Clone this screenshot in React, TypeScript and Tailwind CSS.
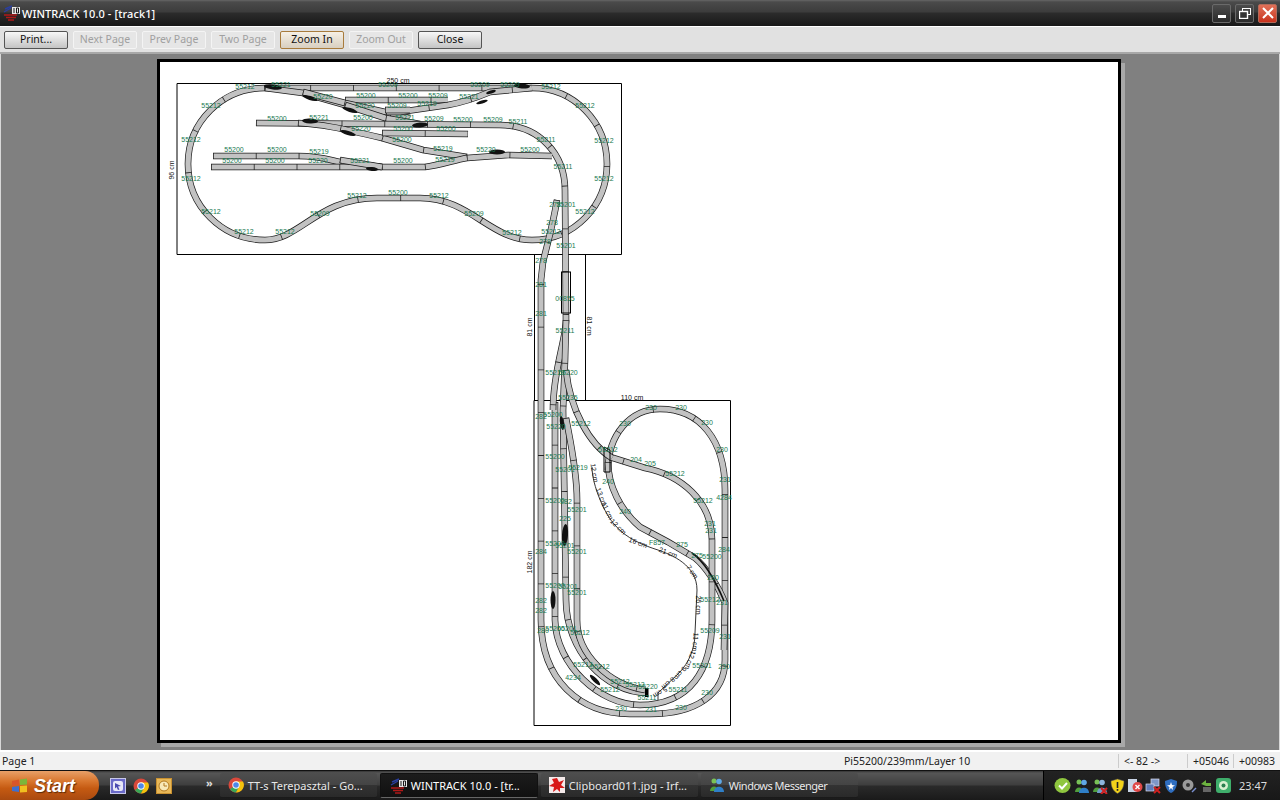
import type { ReactNode } from "react";

const FONT = "font-['Noto_Sans','Liberation_Sans',sans-serif]";

/* Track centre lines, in page coordinates (the svg viewBox matches the page). */
const TRACKS: { d: string; gap?: number }[] = [
  // top oval
  { d: "M265 88 C222 88 188 122 188 164 C188 206 222 240 265 240 C300 240 318 198 377 198 L420 198 C470 198 490 240 532 240 C574 240 607 206 607 164 C607 122 574 88 532 88 L265 88" },
  // yard, top
  { d: "M265 88 L303 93 L345 105 L385 113 L410 118" },
  { d: "M345 100 L448 100" },
  { d: "M303 92 L345 103 L385 112 L400 112 L448 105 C465 102 478 97 490 92 L532 88" },
  { d: "M385 110 L410 110" },
  { d: "M345 105 L385 118 L420 124" },
  // through track leaving for the lower board
  { d: "M256 123 L500 125 C540 125 565 155 565 190 L566 320" },
  { d: "M298 123 C320 124 340 128 382 138 L423 150 L467 157" },
  { d: "M382 133 L468 134" },
  { d: "M213 156 L298 156 C320 156 330 160 340 162 L382 167" },
  { d: "M211 167 L425 167 C440 165 455 160 467 158 L508 155 L552 156" },
  { d: "M340 160 L382 167" },
  // link track, left
  { d: "M557 200 C553 225 547 245 543 262 L541 280 L541 620 C541 680 580 714 630 714 L650 714 C695 714 725 695 725 660 L725 490 C725 440 700 409 660 409 C630 409 608 435 608 470" },
  { d: "M608 462 C608 485 620 510 640 527 L668 542 L695 558 C705 566 718 585 725 603 L724 650" },
  { d: "M555 402 L555 620 C556 665 600 705 640 705 C690 705 712 670 712 620 L712 540 C712 500 680 475 645 468 L610 457" },
  { d: "M566 320 C566 340 553 370 553 410" },
  { d: "M566 320 L565 360 L563 410 L566 600 C566 650 605 693 648 693" },
  { d: "M566 418 C570 440 577 470 577 500 L577 620 C577 655 610 685 645 690" },
  { d: "M566 370 C570 410 590 445 612 458" },
];

/* Turnout motors: cx, cy, rx, ry, angle */
const MOTORS: [number, number, number, number, number][] = [
  [273, 87, 9, 2.5, 6], [310, 98, 8, 2, 18], [350, 110, 8, 2, 18], [310, 121, 8, 2.5, 3],
  [348, 133, 8, 2, 16], [372, 169, 6, 2, 4], [522, 86, 8, 2.5, 4], [491, 92, 5, 1.5, -18],
  [482, 102, 6, 1.5, -18], [420, 125, 8, 2.5, -4], [497, 152, 8, 2.5, 0], [562, 423, 2, 7, -8],
  [565, 535, 3, 11, 4], [553, 600, 2.5, 9, 0], [595, 680, 7, 2, 45],
];

const LABELS: [number, number, string][] = [
  [245, 86, "55212"], [281, 84, "55221"], [388, 84, "55209"], [480, 84, "55209"], [510, 84, "55209"], [551, 86, "55212"],
  [211, 105, "55212"], [323, 96, "55220"], [366, 95, "55200"], [408, 95, "55200"], [438, 95, "55209"], [469, 96, "55221"],
  [397, 105, "55209"], [365, 105, "55220"], [427, 103, "55219"], [585, 105, "55212"],
  [277, 118, "55200"], [319, 117, "55221"], [363, 117, "55200"], [405, 117, "55221"], [434, 118, "55209"], [463, 119, "55200"], [493, 119, "55209"], [518, 121, "55211"],
  [361, 128, "55220"], [403, 128, "55200"], [446, 128, "55200"], [402, 139, "55200"],
  [191, 139, "55212"], [604, 140, "55212"], [546, 139, "55211"],
  [234, 149, "55200"], [277, 149, "55200"], [319, 151, "55219"], [443, 148, "55219"], [486, 149, "55220"], [530, 149, "55200"],
  [232, 160, "55200"], [275, 160, "55200"], [318, 160, "55220"], [360, 160, "55221"], [403, 160, "55200"], [445, 159, "55219"],
  [563, 166, "55211"], [191, 178, "55212"], [604, 178, "55212"],
  [357, 195, "55212"], [398, 192, "55200"], [439, 195, "55212"],
  [211, 211, "55212"], [585, 211, "55212"], [320, 213, "55209"], [474, 213, "55209"],
  [244, 231, "55212"], [285, 231, "55212"], [512, 232, "55212"], [551, 231, "55212"],
  [555, 204, "278"], [566, 204, "55201"], [552, 222, "278"], [545, 241, "278"], [566, 245, "55201"], [541, 260, "278"],
  [541, 284, "281"], [541, 313, "281"], [565, 298, "00855"], [565, 330, "55211"], [555, 372, "55219"], [568, 372, "55220"], [568, 397, "55235"],
  [541, 416, "282"], [553, 414, "55200"], [556, 426, "55220"], [581, 423, "55212"],
  [625, 423, "230"], [651, 407, "230"], [681, 407, "230"], [707, 422, "230"], [722, 449, "230"], [725, 479, "231"], [724, 497, "4284"],
  [608, 449, "55212"], [636, 459, "204"], [650, 463, "205"], [675, 473, "55212"], [703, 500, "55212"],
  [608, 481, "240"], [625, 511, "240"], [710, 523, "231"], [711, 530, "231"],
  [555, 456, "55200"], [565, 469, "55201"], [578, 467, "55219"], [555, 500, "55200"], [566, 501, "282"], [577, 509, "55201"], [565, 518, "225"],
  [657, 542, "F857"], [682, 544, "275"], [697, 555, "275"], [712, 556, "55200"], [724, 549, "284"], [541, 551, "284"],
  [555, 543, "55200"], [565, 545, "55201"], [577, 551, "55201"],
  [555, 585, "55200"], [568, 586, "55201"], [577, 592, "55201"], [541, 600, "282"], [541, 610, "282"], [543, 630, "280"],
  [555, 628, "55200"], [567, 628, "55201"], [580, 632, "55212"], [710, 599, "55212"], [722, 602, "231"], [713, 577, "280"],
  [710, 630, "55209"], [725, 636, "231"], [702, 665, "55201"], [724, 666, "230"], [583, 664, "55212"], [600, 666, "55212"],
  [573, 677, "4234"], [610, 689, "55212"], [620, 681, "55212"], [635, 684, "55212"], [648, 686, "55220"], [647, 697, "55211"],
  [678, 689, "55211"], [707, 692, "230"], [621, 708, "230"], [651, 709, "231"], [681, 707, "230"],
];

/* Black dimension text: x, y, text, rotation */
const DIMS: [number, number, string, number][] = [
  [398, 81, "250 cm", 0], [172, 170, "96 cm", -90], [530, 327, "81 cm", -90], [589, 326, "81 cm", 90],
  [632, 398, "110 cm", 0], [530, 562, "182 cm", -90],
  [594, 473, "12 cm", 80], [601, 497, "13 cm", 70], [607, 511, "11 cm", 65], [618, 527, "12 cm", 45],
  [638, 543, "16 cm", 20], [668, 553, "21 cm", 20], [692, 572, "7 cm", 55], [698, 605, "26 cm", 90],
  [695, 642, "11 cm", 95], [690, 660, "12 cm", 110], [680, 673, "9 cm", 130], [668, 683, "8 cm", 140], [660, 692, "5 cm", 150],
];

function Drawing() {
  return (
    <svg viewBox="160 62 958 678" className="block w-[958px] h-[678px]">
      {/* board outlines */}
      <g fill="none" stroke="#000" strokeWidth="1">
        <path d="M177 83.5 H621.5 V254.5 H177 Z" />
        <path d="M534.5 254.5 V400.5 M585.5 254.5 V400.5" />
        <path d="M534 400.5 H730.5 V725.5 H534 Z" />
        <path d="M592 467 C592 485 605 515 615 525 C625 538 645 546 658 550 C672 555 697 565 697 590 L695 633 C695 650 688 663 680 672 L658 693 V706" strokeWidth="0.8" />
      </g>
      {TRACKS.map((t) => (
        <g key={t.d} fill="none">
          <path d={t.d} stroke="#1a1a1a" strokeWidth="6.6" />
          <path d={t.d} stroke="#c2c2c2" strokeWidth="5.2" />
          <path d={t.d} stroke="#222" strokeWidth="6" strokeDasharray={`0.8 ${t.gap ?? 42}`} />
        </g>
      ))}
      <rect x="561.5" y="272" width="9" height="41" fill="none" stroke="#000" />
      <rect x="645" y="688" width="3.5" height="9" fill="#000" />
      <path d="M604 447 V472 H610 V450 Z" fill="none" stroke="#000" />
      <path d="M692 553 C705 562 716 582 724 601" fill="none" stroke="#111" strokeWidth="1.6" />
      {MOTORS.map(([cx, cy, rx, ry, a]) => (
        <ellipse key={`${cx}-${cy}`} cx={cx} cy={cy} rx={rx} ry={ry} fill="#111" transform={`rotate(${a} ${cx} ${cy})`} />
      ))}
      <g fontFamily="Liberation Sans, sans-serif" fontSize="7" textAnchor="middle">
        {LABELS.map(([x, y, s]) => (
          <text key={`${x}-${y}`} x={x} y={y + 2.5} fill="#1a7a50">{s}</text>
        ))}
        {DIMS.map(([x, y, s, a]) => (
          <text key={`${x}-${y}`} x={x} y={y + 2} fill="#111" transform={`rotate(${a} ${x} ${y})`}>{s}</text>
        ))}
      </g>
    </svg>
  );
}

function WintrackIcon() {
  return (
    <svg width="18" height="18" viewBox="0 0 18 18">
      <path d="M1 8 L8 4 M2 5 L9 2" stroke="#2a3fa0" strokeWidth="1.4" />
      <path d="M1 11 L14 11 M3 13.5 L13 13.5 M5 16 L11 16" stroke="#b01818" strokeWidth="1.6" />
      <rect x="9" y="3" width="8" height="7" fill="#e8e8e8" />
      <path d="M11 4 V9 M13.5 4 H15.5 V9 H13.5 Z" stroke="#1a1a1a" fill="none" />
    </svg>
  );
}

function ChromeIcon() {
  return (
    <svg width="16" height="16" viewBox="0 0 16 16">
      <circle cx="8" cy="8" r="7.5" fill="#d9483b" />
      <path d="M8 8 L2 12 A7.5 7.5 0 0 0 8 15.5 L11.5 9 Z" fill="#3aa757" />
      <path d="M8 4.5 H15 A7.5 7.5 0 0 1 8 15.5 L11.5 9 Z" fill="#f4c20d" />
      <circle cx="8" cy="8" r="3.7" fill="#fff" />
      <circle cx="8" cy="8" r="2.8" fill="#4d88e8" />
    </svg>
  );
}

function MessengerIcon({ cross }: { cross?: boolean }) {
  return (
    <svg width="16" height="16" viewBox="0 0 16 16">
      <circle cx="5" cy="4" r="2.5" fill="#79c257" />
      <path d="M1 14 C1 8 9 8 9 14 Z" fill="#4f9e3c" />
      <circle cx="10" cy="4.5" r="2.8" fill={cross ? "#8db4dc" : "#5fa8e6"} />
      <path d="M5 15 C5 8 15 8 15 15 Z" fill={cross ? "#6f9cc8" : "#2f7fc8"} />
      {cross && <path d="M9 10 L15 16 M15 10 L9 16" stroke="#d02020" strokeWidth="2" />}
    </svg>
  );
}

function TrayIcons() {
  return (
    <div className="flex items-center gap-[2px]">
      <svg width="18" height="18" viewBox="0 0 18 18">
        <ellipse cx="8.5" cy="8.5" rx="8" ry="7.5" fill="#8fc63f" />
        <path d="M5 8.5 L8 11.5 L13 6" stroke="#fff" strokeWidth="2" fill="none" />
      </svg>
      <MessengerIcon />
      <MessengerIcon cross />
      <svg width="15" height="16" viewBox="0 0 15 16">
        <path d="M7.5 1 L14 3 C14 9 12 13 7.5 15.5 C3 13 1 9 1 3 Z" fill="#f3d21a" stroke="#555" strokeWidth="0.5" />
        <rect x="6.7" y="4" width="1.6" height="6" fill="#222" />
        <rect x="6.7" y="11" width="1.6" height="1.8" fill="#222" />
      </svg>
      <svg width="16" height="16" viewBox="0 0 16 16">
        <rect x="1" y="1" width="9" height="13" fill="#c8d4e6" />
        <circle cx="10.5" cy="9" r="5" fill="#e04848" />
        <path d="M8.5 7 L12.5 11 M12.5 7 L8.5 11" stroke="#fff" strokeWidth="1.4" />
      </svg>
      <svg width="16" height="16" viewBox="0 0 16 16">
        <rect x="6" y="1" width="8" height="7" fill="#7d97c8" stroke="#dde" strokeWidth="0.7" />
        <rect x="1" y="6" width="8" height="7" fill="#5f7cb8" stroke="#dde" strokeWidth="0.7" />
        <path d="M9 9 L15 15 M15 9 L9 15" stroke="#d02020" strokeWidth="2" />
      </svg>
      <svg width="16" height="16" viewBox="0 0 16 16">
        <path d="M8 1 L14 3 C14 9 12 13 8 15 C4 13 2 9 2 3 Z" fill="#2f6ec0" />
        <path d="M8 4 L9 7 L12 7.5 L9.5 9 L10 12 L8 10 L6 12 L6.5 9 L4 7.5 L7 7 Z" fill="#fff" />
      </svg>
      <svg width="16" height="16" viewBox="0 0 16 16">
        <circle cx="7" cy="7" r="5.5" fill="#9a9a9a" />
        <circle cx="7" cy="7" r="2" fill="#333" />
        <path d="M11 14 L15 10" stroke="#7a8fd0" strokeWidth="1.4" />
      </svg>
      <svg width="14" height="16" viewBox="0 0 14 16">
        <path d="M2 6 L7 2 V5 H12 V8 H7 Z" fill="#6cb33f" />
        <path d="M4 9 H12 V14 H4 Z" fill="#666" />
      </svg>
      <svg width="17" height="17" viewBox="0 0 17 17">
        <rect x="1" y="1" width="15" height="15" rx="3" fill="#3fae6b" />
        <circle cx="8.5" cy="8.5" r="4.5" fill="#d8f0d0" />
        <circle cx="8.5" cy="8.5" r="2" fill="#2a7f4f" />
      </svg>
    </div>
  );
}

function ToolButton({ label, disabled, active }: { label: string; disabled?: boolean; active?: boolean }) {
  if (disabled) {
    return (
      <div className="w-[64px] h-[18px] flex items-center justify-center rounded-[2px] border border-[#f4f4f4] bg-[#e6e6e6] text-[#a0a0a0]">
        {label}
      </div>
    );
  }
  return (
    <div
      className={
        active
          ? "w-[64px] h-[18px] flex items-center justify-center rounded-[2px] border border-[#a87b3c] bg-linear-to-b from-[#f6f0e6] to-[#d8cfc0] text-[#111]"
          : "w-[64px] h-[18px] flex items-center justify-center rounded-[2px] border border-[#555] bg-linear-to-b from-[#f8f8f8] to-[#c4c4c4] text-[#111]"
      }
    >
      {label}
    </div>
  );
}

function WinButton({ children, close }: { children: ReactNode; close?: boolean }) {
  return (
    <div
      className={
        close
          ? "w-[19px] h-[19px] flex items-center justify-center rounded-[2px] border border-[#b06a5a] bg-linear-to-b from-[#e07058] to-[#c8301a]"
          : "w-[19px] h-[19px] flex items-center justify-center rounded-[2px] border border-[#6a6a6a] bg-linear-to-b from-[#4c4c4c] to-[#2a2a2a]"
      }
    >
      {children}
    </div>
  );
}

function TaskButton({ icon, label, active, narrow }: { icon: ReactNode; label: string; active?: boolean; narrow?: boolean }) {
  return (
    <div
      className={
        active
          ? "w-[158px] h-[25px] flex items-center gap-[3px] pl-[9px] rounded-[2px] border border-[#111] border-b-[#666] bg-linear-to-b from-[#1c1c1c] to-[#101010] text-white"
          : "w-[157px] h-[25px] flex items-center gap-[4px] pl-[8px] rounded-[2px] border-b border-[#1a1a1a] bg-[linear-gradient(#4e4e4e_0,#444_50%,#333_50%,#2a2a2a_100%)] text-[#e8e8e8]"
      }
    >
      {icon}
      <span className={narrow ? "whitespace-nowrap tracking-[-0.5px]" : "whitespace-nowrap"}>{label}</span>
    </div>
  );
}

export default function App() {
  return (
    <div className={`${FONT} w-[1280px] h-[800px] overflow-hidden flex flex-col text-[11px] leading-none`}>
      {/* Title bar */}
      <div className="h-[26px] shrink-0 flex items-center pl-[3px] pr-[3px] bg-[linear-gradient(#666_0,#4a4a4a_2px,#3c3c3c_12px,#2c2c2c_13px,#181818_100%)]">
        <WintrackIcon />
        <span className="ml-[1px] font-medium text-white text-[11px] tracking-[0.1px]">WINTRACK 10.0 - [track1]</span>
        <div className="ml-auto flex gap-[4px]">
          <WinButton>
            <div className="w-[8px] h-[3px] mt-[7px] bg-white" />
          </WinButton>
          <WinButton>
            <svg width="12" height="11" viewBox="0 0 12 11" fill="none" stroke="#fff">
              <rect x="3.5" y="0.5" width="8" height="6" />
              <rect x="0.5" y="3.5" width="8" height="7" fill="#333" strokeWidth="1.4" />
            </svg>
          </WinButton>
          <WinButton close>
            <svg width="12" height="12" viewBox="0 0 12 12" stroke="#fff" strokeWidth="2">
              <path d="M1 1 L11 11 M11 1 L1 11" />
            </svg>
          </WinButton>
        </div>
      </div>

      {/* Preview toolbar */}
      <div className="h-[28px] shrink-0 flex items-center gap-[5px] pl-[4px] text-[10.5px] bg-[#e1e1e1] border-t border-white border-b-2 border-b-[#a8a8a8]">
        <ToolButton label="Print..." />
        <ToolButton label="Next Page" disabled />
        <ToolButton label="Prev Page" disabled />
        <ToolButton label="Two Page" disabled />
        <ToolButton label="Zoom In" active />
        <ToolButton label="Zoom Out" disabled />
        <ToolButton label="Close" />
      </div>

      {/* Page preview */}
      <div className="flex-1 min-h-0 bg-[#808080] pl-[157px] pt-[5px] border-l border-l-[#d8d8d8] border-r border-r-[#d8d8d8]">
        <div className="-ml-px w-[964px] h-[684px] border-[3px] border-black bg-white shadow-[4px_4px_0_#a8a8a8]">
          <Drawing />
        </div>
      </div>

      {/* Status bar */}
      <div className="h-[20px] shrink-0 flex items-center text-[10.5px] bg-[#f1f1f1] border-t-2 border-t-white text-[#222]">
        <span className="pl-[2px]">Page 1</span>
        <span className="ml-auto w-[274px]">Pi55200/239mm/Layer 10</span>
        <span className="w-[69px] h-[14px] flex items-center border-l border-[#ccc] pl-[5px]">&lt;- 82 -&gt;</span>
        <span className="w-[46px] h-[14px] flex items-center border-l border-[#ccc] pl-[5px]">+05046</span>
        <span className="w-[47px] h-[14px] flex items-center border-l border-[#ccc] pl-[5px]">+00983</span>
      </div>

      {/* Taskbar */}
      <div className="h-[30px] shrink-0 flex items-center border-t border-t-[#111] bg-[linear-gradient(#333_0,#565656_2px,#3e3e3e_14px,#2a2a2a_15px,#1a1a1a_100%)] text-[#eee]">
        <div className="w-[99px] h-full flex items-center gap-[6px] pl-[11px] rounded-r-[14px] bg-[linear-gradient(#e8a068_0,#d8762e_35%,#c55a12_60%,#a94a10_100%)]">
          <svg width="17" height="16" viewBox="0 0 17 16">
            <path d="M1 3 L8 1.5 V7 L1 8 Z" fill="#d8562a" />
            <path d="M9 1.5 L16 0.5 V6.5 L9 7 Z" fill="#7cb63a" />
            <path d="M1 9 L8 8 V14 L1 13 Z" fill="#3f6fd0" />
            <path d="M9 8 L16 7.5 V14 L9 14.5 Z" fill="#f0c020" />
          </svg>
          <span className="font-['Liberation_Sans',sans-serif] font-bold italic text-[18px] text-white [text-shadow:1px_1px_1px_#5a2a08]">Start</span>
        </div>
        <div className="ml-[11px] flex items-center gap-[7px]">
          <svg width="16" height="16" viewBox="0 0 16 16">
            <rect x="0.5" y="0.5" width="15" height="15" fill="#6a6ac8" stroke="#c8c8e8" />
            <rect x="3" y="3" width="10" height="10" rx="2" fill="#e8e8f8" />
            <path d="M5 5 L11 8 L8 8.5 L9.5 11.5 L8 12 L6.5 9 L5 10.5 Z" fill="#4a4ab0" />
          </svg>
          <ChromeIcon />
          <svg width="16" height="16" viewBox="0 0 16 16">
            <rect x="0.5" y="0.5" width="15" height="15" fill="#e8b858" stroke="#c89030" />
            <circle cx="8" cy="8" r="5" fill="#f8e8b8" stroke="#b07820" />
            <path d="M8 5 V8 H11" stroke="#b07820" fill="none" />
          </svg>
        </div>
        <span className="ml-[34px] mb-[6px] text-[11px] font-bold text-[#ddd]">»</span>
        <div className="ml-[7px] flex items-center gap-[3px]">
          <TaskButton icon={<ChromeIcon />} label="TT-s Terepasztal - Go..." />
          <TaskButton icon={<WintrackIcon />} label="WINTRACK 10.0 - [tr..." active />
          <TaskButton
            icon={
              <svg width="16" height="16" viewBox="0 0 16 16">
                <rect width="16" height="16" fill="#f4eaea" />
                <path d="M8 1 L10 5 L15 3 L12 8 L16 11 L11 11 L11 15 L8 12 L4 15 L5 10 L0 9 L5 6 L3 2 Z" fill="#d81818" />
              </svg>
            }
            label="Clipboard011.jpg - Irf..."
          />
          <TaskButton icon={<MessengerIcon />} label="Windows Messenger" narrow />
        </div>
        <div className="ml-auto w-[237px] h-full flex items-center gap-[7px] pl-[10px] bg-[linear-gradient(#222_0,#181818_100%)] border-l border-l-[#000]">
          <TrayIcons />
          <span className="text-[#ddd]">23:47</span>
        </div>
      </div>
    </div>
  );
}
